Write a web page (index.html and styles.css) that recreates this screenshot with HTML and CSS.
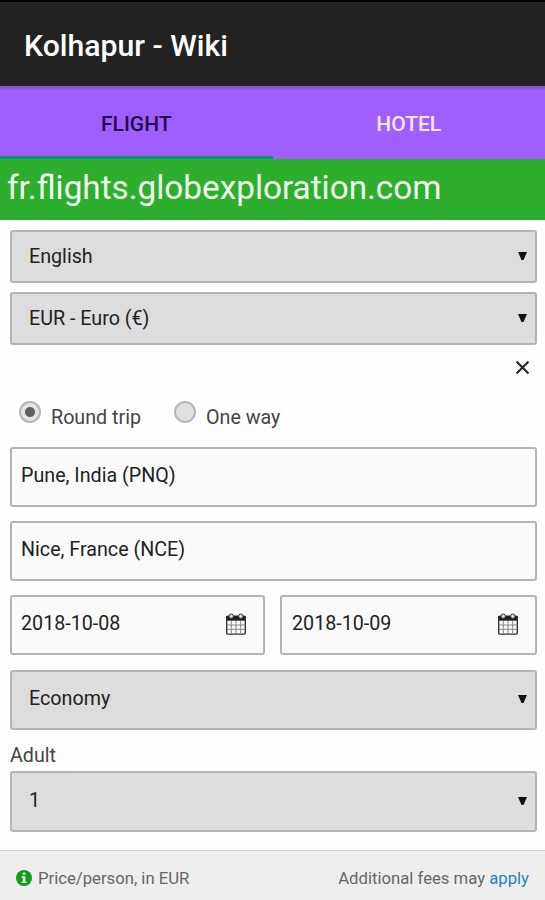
FILE: index.html
```html
<!DOCTYPE html>
<html lang="en">
<head>
    <meta charset="UTF-8">
    <meta name="viewport" content="width=device-width, initial-scale=1.0">
    <title>Kolhapur - Wiki</title>
    <link rel="stylesheet" href="styles.css">
</head>
<body>
    <div id="app">
        <header>
            <h1>Kolhapur - Wiki</h1>
        </header>

        <nav>
            <a class="tab active"><span>FLIGHT</span></a>
            <a class="tab"><span>HOTEL</span></a>
        </nav>

        <div class="site"><span>fr.flights.globexploration.com</span></div>

        <main>
            <div class="select small">
                <span>English</span>
                <svg class="arrow" viewBox="0 0 9 8"><path d="M0 0h9L5.5 8h-2z"/></svg>
            </div>
            <div class="select small">
                <span>EUR - Euro (€)</span>
                <svg class="arrow" viewBox="0 0 9 8"><path d="M0 0h9L5.5 8h-2z"/></svg>
            </div>

            <div class="close">
                <svg viewBox="0 0 12 12"><path d="M0.5 0.5l11 11M11.5 0.5l-11 11"/></svg>
            </div>

            <div class="trip">
                <label class="round"><i class="radio checked"></i><span>Round trip</span></label>
                <label><i class="radio"></i><span>One way</span></label>
            </div>

            <div class="input"><span>Pune, India (PNQ)</span></div>
            <div class="input"><span>Nice, France (NCE)</span></div>

            <div class="dates">
                <div class="input">
                    <span>2018-10-08</span>
                    <svg class="calendar" viewBox="0 0 20 22">
                        <rect class="frame" x="0.7" y="3.3" width="18.6" height="17.8" rx="1"/>
                        <path class="bar" d="M0.5 3h19v4.7h-19z"/>
                        <path class="lines" d="M1 12h18M1 16.3h18M5.3 8v13M10 8v13M14.7 8v13"/>
                        <circle class="ring" cx="5.2" cy="3.2" r="2.2"/>
                        <circle class="ring" cx="14.8" cy="3.2" r="2.2"/>
                    </svg>
                </div>
                <div class="input">
                    <span>2018-10-09</span>
                    <svg class="calendar" viewBox="0 0 20 22">
                        <rect class="frame" x="0.7" y="3.3" width="18.6" height="17.8" rx="1"/>
                        <path class="bar" d="M0.5 3h19v4.7h-19z"/>
                        <path class="lines" d="M1 12h18M1 16.3h18M5.3 8v13M10 8v13M14.7 8v13"/>
                        <circle class="ring" cx="5.2" cy="3.2" r="2.2"/>
                        <circle class="ring" cx="14.8" cy="3.2" r="2.2"/>
                    </svg>
                </div>
            </div>

            <div class="select">
                <span>Economy</span>
                <svg class="arrow" viewBox="0 0 9 8"><path d="M0 0h9L5.5 8h-2z"/></svg>
            </div>

            <div class="field-label"><span>Adult</span></div>
            <div class="select adult">
                <span>1</span>
                <svg class="arrow" viewBox="0 0 9 8"><path d="M0 0h9L5.5 8h-2z"/></svg>
            </div>
        </main>

        <footer>
            <div class="price">
                <svg class="info" viewBox="0 0 16 16">
                    <circle cx="8" cy="8" r="8"/>
                    <path d="M6.8 2.6h2.6v2.2H6.8zM5.7 6.2h3.7v5.2h1.3v1.5H5.5v-1.5h1.3V7.7H5.7z"/>
                </svg>
                <span>Price/person, in EUR</span>
            </div>
            <div class="fees"><span>Additional fees may <a>apply</a></span></div>
        </footer>
    </div>
</body>
</html>
```

FILE: styles.css
```css
* {
    box-sizing: border-box;
}

body {
    margin: 0;
    background-color: #fefefe;
    color: #222;
    font-family: Roboto, "Liberation Sans", sans-serif;
    font-size: 19.7px;
    line-height: 24px;
    overflow: hidden;
}

#app {
    display: flex;
    flex-direction: column;
    height: 900px;
}

span {
    white-space: nowrap;
}

header {
    height: 86px;
    padding: 26px 24px 0;
    background-color: #222;
    border-top: 2px solid #000;
}

h1 {
    margin: 0;
    color: #fff;
    font-size: 30.2px;
    font-weight: 500;
    line-height: 35px;
}

nav {
    display: flex;
    height: 73px;
    background: linear-gradient(#8050bd, #a05eff 5px);
}

.tab {
    display: flex;
    flex: 1;
    align-items: center;
    justify-content: center;
    padding-top: 5px;
    border-bottom: 3px solid transparent;
    color: #f9e6ff;
    font-size: 21px;
    font-weight: 500;
}

.tab.active {
    border-bottom-color: #109080;
    color: #220a48;
}

.site {
    height: 61px;
    padding: 9px 7px 0;
    background-color: #2dae2f;
    color: #efffe9;
    font-size: 33.3px;
    line-height: 40px;
}

main {
    display: flex;
    flex: 1;
    flex-direction: column;
    padding: 10px 8px 0 10px;
}

.select,
.input {
    display: flex;
    flex: none;
    align-items: center;
    justify-content: space-between;
    height: 60px;
    border: 2px solid #b4b4b4;
    border-radius: 3px;
}

.select {
    padding: 0 8px 3px 17px;
    background-color: #ddd;
}

.select span {
    margin-top: 1px;
}

.select.small {
    height: 53px;
    margin-bottom: 9px;
    padding-bottom: 2px;
}

.select.small span {
    margin-top: 2px;
}

.select.adult {
    height: 61px;
    padding-bottom: 2px;
}

.input {
    margin-bottom: 14px;
    padding: 0 17px 3px 9px;
    background-color: #fafafa;
}

.arrow {
    width: 9px;
    height: 8px;
    fill: #111;
}

.close {
    display: flex;
    justify-content: flex-end;
    height: 47px;
    padding: 7px 8px 0 0;
}

.close svg {
    width: 13px;
    height: 13px;
    fill: none;
    stroke: #222;
    stroke-width: 1.9;
}

.trip {
    display: flex;
    height: 46px;
    padding-left: 9px;
    color: #444;
}

.trip label {
    display: flex;
    align-items: flex-start;
}

.trip span {
    margin-top: 5px;
}

.round {
    width: 155px;
}

.radio {
    width: 22px;
    height: 22px;
    margin-right: 10px;
    border: 2px solid #b5b5b5;
    border-radius: 50%;
    background-color: #e0e0e0;
}

.radio.checked {
    background: radial-gradient(circle, #606060 4.5px, #e4e4e4 5.5px);
}

.dates {
    display: grid;
    grid-template-columns: 255px 257px;
    gap: 15px;
    margin-bottom: 1px;
}

.dates .input + .input {
    padding-left: 10px;
}

.calendar {
    width: 20px;
    height: 22px;
    fill: none;
    stroke: #333;
}

.calendar .frame {
    stroke-width: 1.4;
}

.calendar .bar {
    fill: #222;
    stroke: none;
}

.calendar .lines {
    stroke: #888;
}

.calendar .ring {
    fill: #ddd;
}

.field-label {
    height: 41px;
    padding-top: 14px;
    color: #444;
}

footer {
    display: flex;
    justify-content: space-between;
    height: 50px;
    padding: 16px 16px 0;
    background-color: #eee;
    border-top: 1px solid #d4d4d4;
    color: #666;
    font-size: 16.7px;
}

.price {
    display: flex;
    gap: 6px;
}

.info {
    width: 16px;
    height: 16px;
    margin-top: 3px;
    fill: #129b18;
}

.info path {
    fill: #e4f8e0;
}

footer a {
    color: #2382bd;
}
```
